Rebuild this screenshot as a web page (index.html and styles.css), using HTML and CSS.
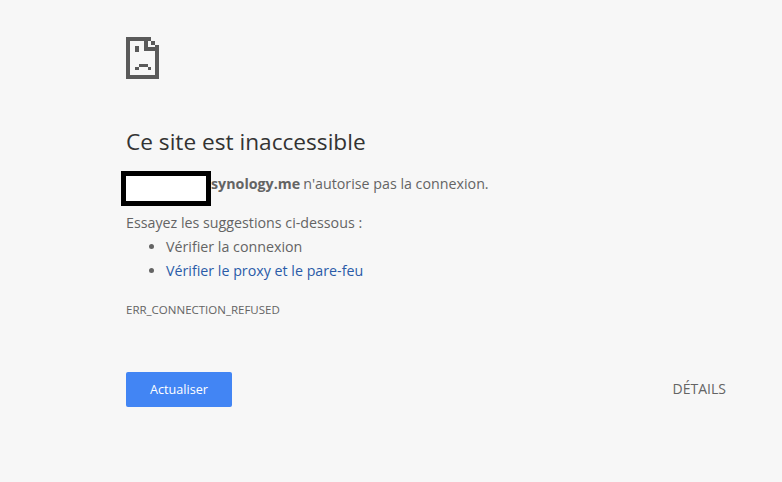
FILE: index.html
```html
<!DOCTYPE html>
<html lang="fr">
<head>
    <meta charset="UTF-8">
    <title>Ce site est inaccessible</title>
    <link rel="stylesheet" href="styles.css">
</head>
<body>
    <div class="container">
        <svg class="icon" width="33" height="42" viewBox="0 0 33 42" shape-rendering="crispEdges" fill="#5a5a5a">
            <path d="M0 0h25v4h4v4h4v34h-33zM4 4v34h25v-24h-11v-10zM22 4v6h7v-2h-4v-4z" fill-rule="evenodd"/>
            <rect x="9" y="9" width="4" height="6"/>
            <path d="M9 33v-3h4v-3h9v3h3v3h-3v-3h-9v3z"/>
        </svg>
        <h1>Ce site est inaccessible</h1>
        <p class="summary"><span class="redacted"></span><strong>synology.me</strong> n'autorise pas la connexion.</p>
        <p class="suggest">Essayez les suggestions ci-dessous :</p>
        <ul>
            <li>Vérifier la connexion</li>
            <li><a href="#">Vérifier le proxy et le pare-feu</a></li>
        </ul>
        <div class="code">ERR_CONNECTION_REFUSED</div>
        <div class="buttons">
            <button class="reload">Actualiser</button>
            <button class="details">DÉTAILS</button>
        </div>
    </div>
</body>
</html>
```
FILE: styles.css
```css
html, body {
    height: 100%;
}
body {
    margin: 0;
    background-color: #f7f7f7;
    color: #646464;
    font-family: "Open Sans", Arial, sans-serif;
    font-size: 14.25px;
}
.container {
    width: 600px;
    padding: 37px 0 0 126px;
}
.icon {
    display: block;
}
h1 {
    margin: 48px 0 0;
    color: #333;
    font-size: 22.65px;
    font-weight: 400;
    line-height: 30px;
}
.summary {
    display: flex;
    margin: 14px 0 0 -5px;
    line-height: 26px;
    height: 35px;
}
.summary strong {
    font-weight: 700;
    margin-right: 3px;
}
.redacted {
    display: block;
    box-sizing: border-box;
    width: 90px;
    height: 35px;
    border: 5px solid #000;
    background: #fff;
}
.suggest {
    margin: 5px 0 0;
    line-height: 24px;
}
ul {
    margin: 0;
    padding-left: 40px;
}
li {
    line-height: 24px;
}
a {
    color: #2a5ba8;
    text-decoration: none;
}
.code {
    margin-top: 19px;
    font-size: 11.5px;
    line-height: 16px;
}
.buttons {
    display: flex;
    justify-content: space-between;
    align-items: center;
    margin-top: 54px;
}
button {
    border: none;
    font-family: inherit;
    padding: 0;
}
.reload {
    width: 106px;
    height: 35px;
    border-radius: 2px;
    background-color: #4285f4;
    color: #fff;
    font-size: 12.6px;
}
.details {
    background: none;
    color: #646464;
    font-size: 14px;
    padding-bottom: 2px;
}
```
